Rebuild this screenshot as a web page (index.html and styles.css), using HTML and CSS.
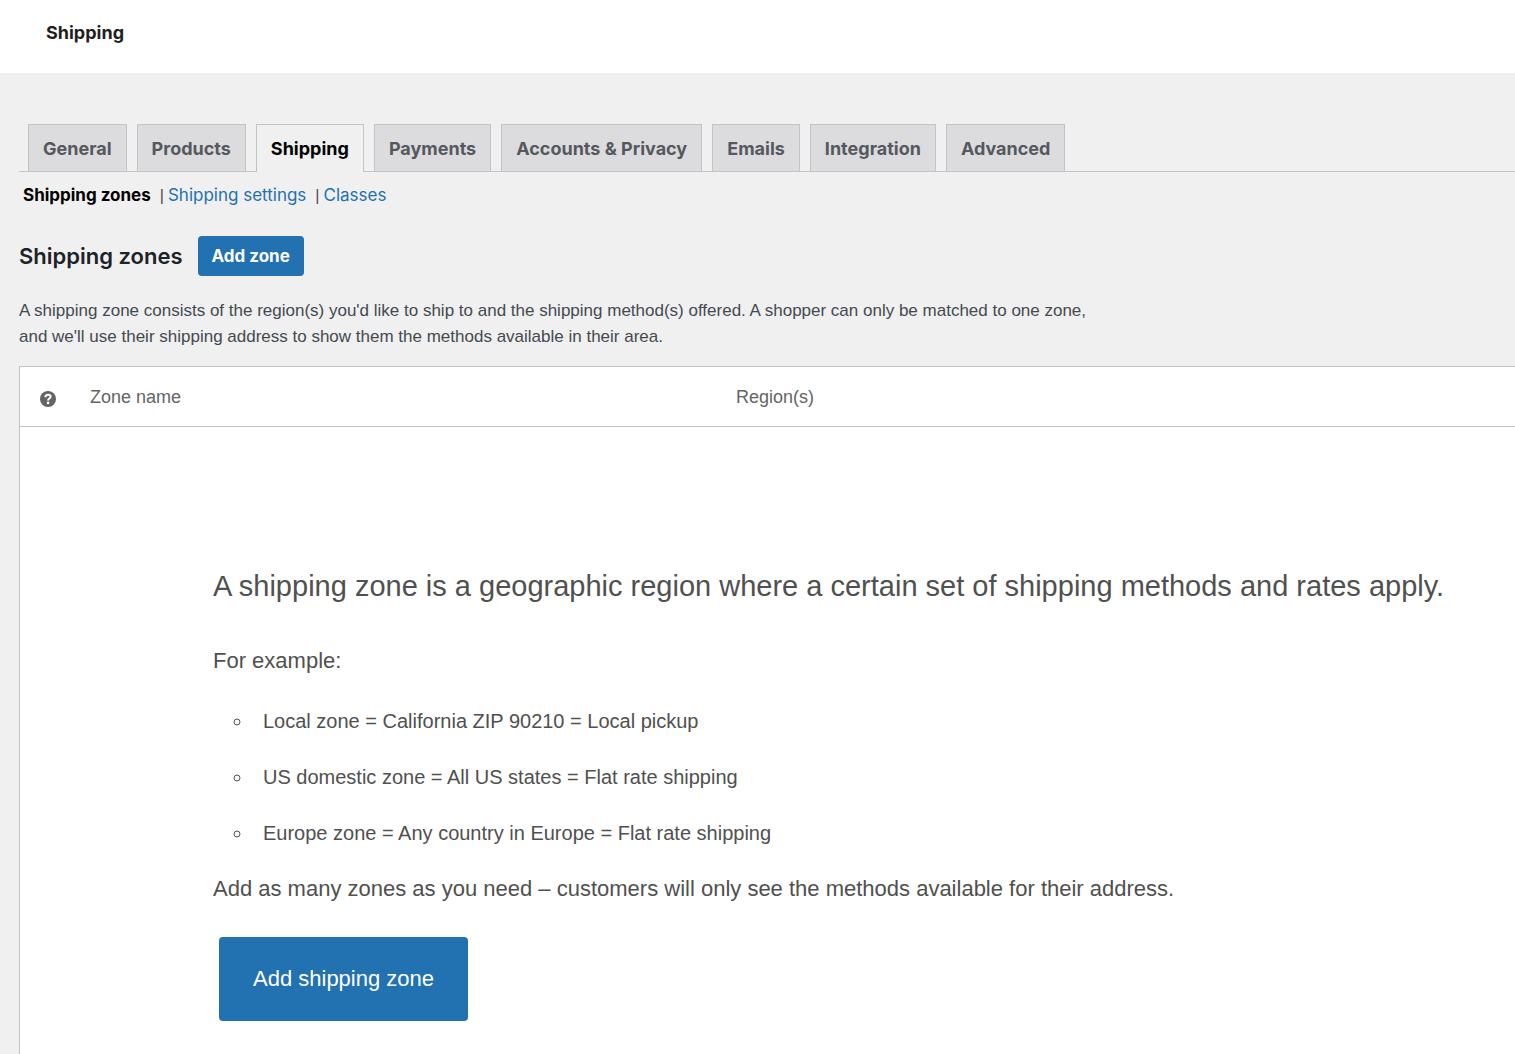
FILE: index.html
```html
<!DOCTYPE html>
<html lang="en">
<head>
  <meta charset="UTF-8" />
  <title>Shipping</title>
  <meta name="viewport" content="width=device-width, initial-scale=1.0"/>
  <link rel="stylesheet" href="styles.css">
</head>

<body>
  <!-- Page header -->
  <header class="page-header">
    <h1>Shipping</h1>
  </header>

  <main class="settings">
    <!-- Settings tabs -->
    <nav class="tabs">
      <a href="#general" class="tab">General</a>
      <a href="#products" class="tab">Products</a>
      <a href="#shipping" class="tab tab-active">Shipping</a>
      <a href="#payments" class="tab">Payments</a>
      <a href="#accounts" class="tab">Accounts &amp; Privacy</a>
      <a href="#emails" class="tab">Emails</a>
      <a href="#integration" class="tab">Integration</a>
      <a href="#advanced" class="tab">Advanced</a>
    </nav>

    <!-- Sections -->
    <ul class="sections">
      <li><a href="#zones" class="current">Shipping zones</a></li>
      <li><a href="#options">Shipping settings</a></li>
      <li><a href="#classes">Classes</a></li>
    </ul>

    <div class="zones-heading">
      <h2>Shipping zones</h2>
      <button type="button" class="button button-small">Add zone</button>
    </div>

    <p class="description">A shipping zone consists of the region(s) you'd like to ship to and the shipping method(s) offered. A shopper can only be matched to one zone, and we'll use their shipping address to show them the methods available in their area.</p>

    <!-- Zones table -->
    <table class="zones-table">
      <thead>
        <tr>
          <th class="col-help">
            <svg class="help-icon" viewBox="0 0 16 16" role="img" aria-label="Help">
              <circle cx="8" cy="8" r="8" fill="#646464"/>
              <path d="M5.4 6.3C5.4 4.6 6.5 3.8 8.1 3.8C9.7 3.8 10.6 4.6 10.6 5.8C10.6 7.5 8.1 7.5 8.1 9.4" fill="none" stroke="#fff" stroke-width="2.1"/>
              <circle cx="8.1" cy="11.9" r="1.3" fill="#fff"/>
            </svg>
          </th>
          <th class="col-name">Zone name</th>
          <th>Region(s)</th>
        </tr>
      </thead>
      <tbody>
        <tr>
          <td colspan="3" class="blank-state">
            <p class="lead">A shipping zone is a geographic region where a certain set of shipping methods and rates apply.</p>
            <p>For example:</p>
            <ul class="examples">
              <li>Local zone = California ZIP 90210 = Local pickup</li>
              <li>US domestic zone = All US states = Flat rate shipping</li>
              <li>Europe zone = Any country in Europe = Flat rate shipping</li>
            </ul>
            <p>Add as many zones as you need – customers will only see the methods available for their address.</p>
            <button type="button" class="button button-large">Add shipping zone</button>
          </td>
        </tr>
      </tbody>
    </table>
  </main>
</body>
</html>
```

FILE: styles.css
```css
/* =============== BASE =============== */
html,
body {
  margin: 0;
  padding: 0;
}
body {
  min-height: 100vh;
  overflow: hidden;
  background: #f0f0f0;
  color: #444a50;
  font-family: "Liberation Sans", Arial, sans-serif;
  font-size: 17px;
}
h1,
h2,
p,
ul {
  margin: 0;
  padding: 0;
}
a {
  color: #2271b1;
  text-decoration: none;
}

/* =============== HEADER =============== */
.page-header {
  padding: 21px 46px 28px;
  background: #fff;
}
.page-header h1 {
  color: #1e1e1e;
  font-family: "Inter", sans-serif;
  font-size: 18px;
  font-weight: 700;
  line-height: 24px;
}

.settings {
  padding: 51px 0 0 19px;
}

/* =============== TABS =============== */
.tabs {
  display: flex;
  gap: 10px;
  padding-left: 9px;
  border-bottom: 1px solid #c3c4c7;
}
.tab {
  padding: 9px 14px 7px;
  border: 1px solid #c3c4c7;
  border-bottom: none;
  background: #dcdcde;
  color: #55595e;
  font-family: "Inter", sans-serif;
  font-size: 18px;
  font-weight: 700;
  line-height: 30px;
}
.tab-active {
  margin-bottom: -1px;
  padding-bottom: 8px;
  background: #f0f0f0;
  color: #000;
}

/* =============== SECTIONS =============== */
.sections {
  display: flex;
  padding: 11px 4px;
  list-style: none;
  font-family: "Inter", sans-serif;
  line-height: 24px;
}
.sections li + li::before {
  content: "|";
  padding: 0 4px 0 9px;
  font-family: "Liberation Sans", Arial, sans-serif;
  font-size: 16px;
  line-height: 1;
}
.sections .current {
  color: #000;
  font-weight: 700;
}

/* =============== HEADING =============== */
.zones-heading {
  display: flex;
  align-items: center;
  gap: 15px;
  padding: 18px 0 22px;
}
.zones-heading h2 {
  color: #1d2327;
  font-family: "Inter", sans-serif;
  font-size: 22px;
  font-weight: 600;
}
.button {
  border: none;
  border-radius: 4px;
  background: #2271b1;
  color: #fff;
}
.button-small {
  padding: 8px 14px;
  font-family: "Inter", sans-serif;
  font-size: 17px;
  font-weight: 700;
  line-height: 24px;
}
.description {
  max-width: 1080px;
  line-height: 26px;
}

/* =============== TABLE =============== */
.zones-table {
  width: 100%;
  margin-top: 16px;
  border: 1px solid #c3c4c7;
  border-right: none;
  border-spacing: 0;
  background: #fff;
}
.zones-table th {
  padding: 17px 0 15px;
  border-bottom: 1px solid #c3c4c7;
  color: #646464;
  font-size: 18px;
  font-weight: 400;
  line-height: 27px;
  text-align: left;
}
.zones-table .col-help {
  width: 50px;
  padding-left: 20px;
}
.col-name {
  width: 646px;
}
.help-icon {
  display: block;
  width: 16px;
  height: 16px;
  margin-top: 2px;
}

/* =============== BLANK STATE =============== */
.blank-state {
  padding: 136px 0 64px 193px;
  color: #505050;
  font-size: 22px;
  line-height: 32px;
}
.blank-state .lead {
  margin-bottom: 36px;
  font-size: 29px;
  line-height: 46px;
}
.examples {
  margin: 28px 0 24px;
  padding-left: 40px;
  list-style: circle;
  font-size: 20px;
}
.examples li {
  padding-left: 10px;
}
.examples li + li {
  margin-top: 24px;
}
.button-large {
  margin: 32px 6px 0;
  padding: 26px 34px;
  font-family: inherit;
  font-size: 22px;
  line-height: 32px;
}
```
